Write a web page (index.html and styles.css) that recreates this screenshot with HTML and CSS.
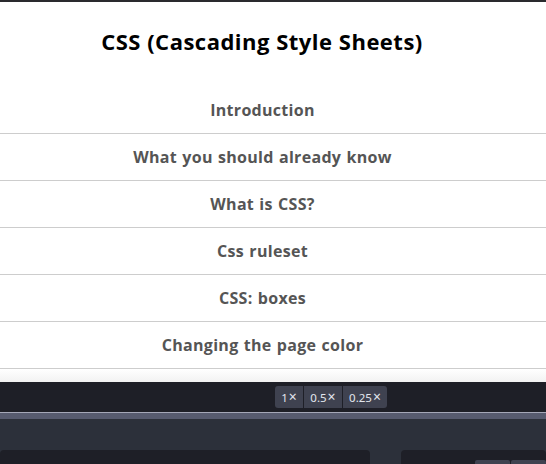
FILE: index.html
```html
<!DOCTYPE html>
<html>
<head>
<meta charset="utf-8">
<link rel="stylesheet" href="styles.css">
</head>
<body>
<div class="page">
  <h1 class="title">CSS (Cascading Style Sheets)</h1>
  <ul class="toc">
    <li class="toc-item">Introduction</li>
    <li class="toc-item">What you should already know</li>
    <li class="toc-item">What is CSS?</li>
    <li class="toc-item">Css ruleset</li>
    <li class="toc-item">CSS: boxes</li>
    <li class="toc-item">Changing the page color</li>
  </ul>
  <div class="fade"></div>
</div>
<div class="toolbar">
  <div class="zoom-group">
    <span class="zoom-btn">1<span class="x">×</span></span>
    <span class="zoom-btn">0.5<span class="x">×</span></span>
    <span class="zoom-btn">0.25<span class="x">×</span></span>
  </div>
</div>
<div class="divider"></div>
<div class="workspace">
  <div class="panel panel-left"></div>
  <div class="panel panel-right">
    <span class="mini-btn"></span>
    <span class="mini-btn"></span>
  </div>
</div>
</body>
</html>
```
FILE: styles.css
```css
* { box-sizing: border-box; }
html, body { margin: 0; padding: 0; }
body {
  width: 546px;
  height: 464px;
  overflow: hidden;
  background: #2c303a;
  font-family: "Open Sans", "Noto Sans", sans-serif;
}
.page {
  background: #fff;
  border-top: 2px solid #2a2a2e;
  height: 382px;
  display: flex;
  flex-direction: column;
}
.title {
  margin: 0;
  height: 85px;
  display: flex;
  align-items: center;
  justify-content: center;
  padding-bottom: 8px;
  padding-right: 22px;
  font-size: 22px;
  font-weight: 700;
  color: #000;
  letter-spacing: 0.5px;
}
.toc {
  list-style: none;
  margin: 0;
  padding: 0;
}
.toc-item {
  height: 47px;
  border-bottom: 1px solid #cdcdcd;
  display: flex;
  align-items: center;
  justify-content: center;
  font-size: 16px;
  font-weight: 700;
  color: #555;
  padding-bottom: 1px;
  padding-right: 21px;
  letter-spacing: 0.3px;
  word-spacing: 0.8px;
}
.fade {
  flex: 1;
  background: linear-gradient(#fff, #f2f2f2);
}
.toolbar {
  height: 30px;
  background: #1e1f27;
  display: flex;
  align-items: center;
  padding-left: 275px;
}
.zoom-group {
  display: flex;
  gap: 1px;
  border-radius: 3px;
  overflow: hidden;
  height: 22px;
}
.zoom-btn {
  background: #3f4250;
  color: #e2e6ee;
  font-family: "Noto Sans", sans-serif;
  font-size: 11.5px;
  display: flex;
  align-items: center;
  justify-content: center;
  padding: 0 3px;
}
.x {
  font-size: 14px;
  line-height: 1;
  margin-left: 1px;
}
.zoom-btn:nth-child(1) { width: 28px; }
.zoom-btn:nth-child(2) { width: 38px; }
.zoom-btn:nth-child(3) { width: 44px; }
.divider {
  height: 7px;
  border-top: 1px solid #a5a8b8;
  background: #575b6f;
}
.workspace {
  display: flex;
  gap: 31px;
  padding-top: 31px;
}
.panel {
  background: #1e1f27;
  height: 20px;
  border-radius: 4px 4px 0 0;
}
.panel-left { width: 370px; }
.panel-right {
  flex: 1;
  display: flex;
  gap: 1px;
  padding-left: 74px;
  padding-top: 10px;
}
.mini-btn {
  width: 35px;
  height: 10px;
  background: #3f4250;
  border-radius: 2px 2px 0 0;
}
```
